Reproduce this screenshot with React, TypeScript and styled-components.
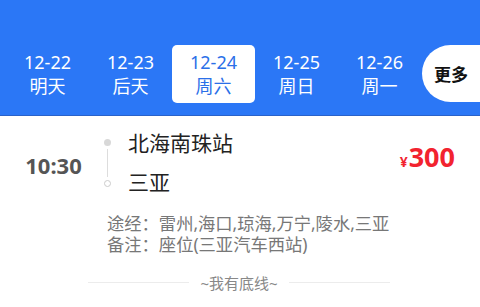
import styled, { createGlobalStyle } from 'styled-components';

const GlobalStyle = createGlobalStyle`
  body {
    margin: 0;
    background: #fff;
    font-family: "Noto Sans", "Noto Sans CJK SC", sans-serif;
  }
`;

const Page = styled.div`
  width: 480px;
  height: 307px;
  overflow: hidden;
  background: #fff;
`;

const Header = styled.div`
  display: flex;
  align-items: flex-start;
  height: 116px;
  box-sizing: border-box;
  padding: 45px 0 0 6px;
  background: #2b77f6;
  border-bottom: 1px solid #2a62c9;
`;

const DateTab = styled.div<{ $active?: boolean }>`
  display: flex;
  flex-direction: column;
  align-items: center;
  justify-content: center;
  width: 83px;
  height: 58px;
  flex-shrink: 0;
  border-radius: 5px;
  background: ${({ $active }) => ($active ? '#fff' : 'transparent')};
  color: ${({ $active }) => ($active ? '#2b6fe8' : '#fff')};
  font-size: 18px;
  line-height: 24px;
`;

const MoreButton = styled.div`
  display: flex;
  align-items: center;
  justify-content: center;
  width: 60px;
  height: 57px;
  margin-left: 1px;
  border-radius: 29px 0 0 29px;
  background: #fff;
  color: #111;
  font-size: 17px;
  font-weight: bold;
`;

const Trip = styled.div`
  display: flex;
  align-items: flex-start;
  padding: 16px 0 0 0;
`;

const Time = styled.div`
  width: 103px;
  padding-top: 18px;
  text-align: center;
  font-size: 22px;
  font-weight: bold;
  color: #555;
  box-sizing: border-box;
  padding-left: 4px;
`;

const Timeline = styled.div`
  display: flex;
  flex-direction: column;
  align-items: center;
  width: 8px;
  padding-top: 7px;
`;

const Dot = styled.div<{ $hollow?: boolean }>`
  width: 7px;
  height: 7px;
  border-radius: 50%;
  box-sizing: border-box;
  background: ${({ $hollow }) => ($hollow ? '#fff' : '#d8d8d8')};
  border: ${({ $hollow }) => ($hollow ? '1.5px solid #ccc' : 'none')};
`;

const Line = styled.div`
  width: 1px;
  height: 28px;
  margin: 3px 0;
  background: #ddd;
`;

const Stations = styled.div`
  display: flex;
  flex-direction: column;
  gap: 17px;
  margin-left: 17px;
  font-size: 21px;
  line-height: 22px;
  color: #222;
  flex: 1;
`;

const Price = styled.div`
  display: flex;
  align-items: baseline;
  padding: 10px 25px 0 0;
  color: #f2232f;
  font-weight: bold;
`;

const Yen = styled.span`
  font-size: 14px;
  margin-right: 1px;
`;

const Amount = styled.span`
  font-size: 27px;
  line-height: 30px;
  font-family: "Open Sans", "Noto Sans", sans-serif;
`;

const Notes = styled.div`
  padding: 20px 0 0 107px;
  font-size: 17.3px;
  line-height: 21px;
  color: #777;
`;

const Footer = styled.div`
  display: flex;
  align-items: center;
  gap: 11px;
  padding: 17px 0 0 88px;
  width: 302px;
  color: #888;
  font-size: 15px;
`;

const Rule = styled.div`
  flex: 1;
  height: 1px;
  background: #ececec;
`;

const dates = [
  { day: '12-22', week: '明天' },
  { day: '12-23', week: '后天' },
  { day: '12-24', week: '周六', active: true },
  { day: '12-25', week: '周日' },
  { day: '12-26', week: '周一' },
];

export default function App() {
  return (
    <Page>
      <GlobalStyle />
      <Header>
        {dates.map((d) => (
          <DateTab key={d.day} $active={d.active}>
            <span>{d.day}</span>
            <span>{d.week}</span>
          </DateTab>
        ))}
        <MoreButton>更多</MoreButton>
      </Header>
      <Trip>
        <Time>10:30</Time>
        <Timeline>
          <Dot />
          <Line />
          <Dot $hollow />
        </Timeline>
        <Stations>
          <span>北海南珠站</span>
          <span>三亚</span>
        </Stations>
        <Price>
          <Yen>¥</Yen>
          <Amount>300</Amount>
        </Price>
      </Trip>
      <Notes>
        <div>途经：雷州,海口,琼海,万宁,陵水,三亚</div>
        <div>备注：座位(三亚汽车西站)</div>
      </Notes>
      <Footer>
        <Rule />
        <span>~我有底线~</span>
        <Rule />
      </Footer>
    </Page>
  );
}
